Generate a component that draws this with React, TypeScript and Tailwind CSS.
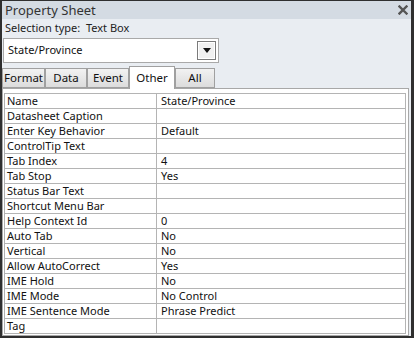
import React from 'react';

const rows: [string, string][] = [
  ['Name', 'State/Province'],
  ['Datasheet Caption', ''],
  ['Enter Key Behavior', 'Default'],
  ['ControlTip Text', ''],
  ['Tab Index', '4'],
  ['Tab Stop', 'Yes'],
  ['Status Bar Text', ''],
  ['Shortcut Menu Bar', ''],
  ['Help Context Id', '0'],
  ['Auto Tab', 'No'],
  ['Vertical', 'No'],
  ['Allow AutoCorrect', 'Yes'],
  ['IME Hold', 'No'],
  ['IME Mode', 'No Control'],
  ['IME Sentence Mode', 'Phrase Predict'],
  ['Tag', ''],
];

const tabs = [
  { label: 'Format', w: 'w-[43px]' },
  { label: 'Data', w: 'w-[42px]' },
  { label: 'Event', w: 'w-[42px]' },
  { label: 'Other', w: 'w-[46px]', active: true },
  { label: 'All', w: 'w-[40px]' },
];

export default function App() {
  return (
    <div
      className="flex h-[338px] w-[414px] flex-col overflow-hidden border-b-2 border-l-2 border-r-[3px] border-t border-[#2f2f2f] bg-[#e9edf2] text-[#111] text-[11px]"
      style={{ fontFamily: '"Noto Sans", "Open Sans", sans-serif' }}
    >
      {/* title bar */}
      <div className="flex h-[18px] shrink-0 items-center justify-between bg-[#d4dbe3] pl-[3px] pr-[3px]">
        <span className="text-[13px] leading-none text-[#333]">Property Sheet</span>
        <svg width="10" height="10" viewBox="0 0 10 10">
          <path d="M1.5 1.5 L8.5 8.5 M8.5 1.5 L1.5 8.5" stroke="#555" strokeWidth="2.4" strokeLinecap="square" />
        </svg>
      </div>

      <div className="flex h-[18px] items-center pl-[3px] text-[#222]">Selection type:&nbsp;&nbsp;Text Box</div>

      {/* combo box */}
      <div className="ml-[1px] mt-[1px] flex h-[25px] w-[216px] items-center justify-between border border-[#a9a9a9] bg-white pl-[4px] pr-[2px]">
        <span>State/Province</span>
        <div className="flex h-[19px] w-[19px] items-center justify-center border border-[#7b7b7b] bg-[#f0f0f0] shadow-[inset_0_0_0_1px_#fff]">
          <svg width="8" height="5" viewBox="0 0 8 5">
            <path d="M0 0 H8 L4 5 Z" fill="#111" />
          </svg>
        </div>
      </div>

      {/* tabs */}
      <div className="mt-[3px] flex h-[22px] items-end">
        {tabs.map((t) =>
          t.active ? (
            <div
              key={t.label}
              className={`${t.w} relative z-10 -mb-px flex h-[23px] items-start justify-center border border-b-0 border-[#a0a0a0] bg-white pt-[2px] text-[11.5px]`}
            >
              {t.label}
            </div>
          ) : (
            <div
              key={t.label}
              className={`${t.w} flex h-[20px] items-center justify-center border border-[#a0a0a0] bg-gradient-to-b from-[#f2f2f2] to-[#dcdcdc] text-[11.5px]`}
            >
              {t.label}
            </div>
          )
        )}
      </div>

      {/* tab page */}
      <div className="mr-[2px] flex-1 border border-[#a8a8a8] bg-white pl-px pr-[2px] pt-[4px]">
        <div className="border-l border-[#b0b0b0]">
          {rows.map(([k, v]) => (
            <div key={k} className="flex h-[15px] border-t border-[#b4b4b4] leading-[14px]">
              <div className="w-[152px] shrink-0 border-r border-[#b4b4b4] pl-[2px]">{k}</div>
              <div className="flex-1 border-r border-[#b4b4b4] pl-[4px]">{v}</div>
            </div>
          ))}
          <div className="border-t border-[#b4b4b4]" />
        </div>
      </div>
    </div>
  );
}
